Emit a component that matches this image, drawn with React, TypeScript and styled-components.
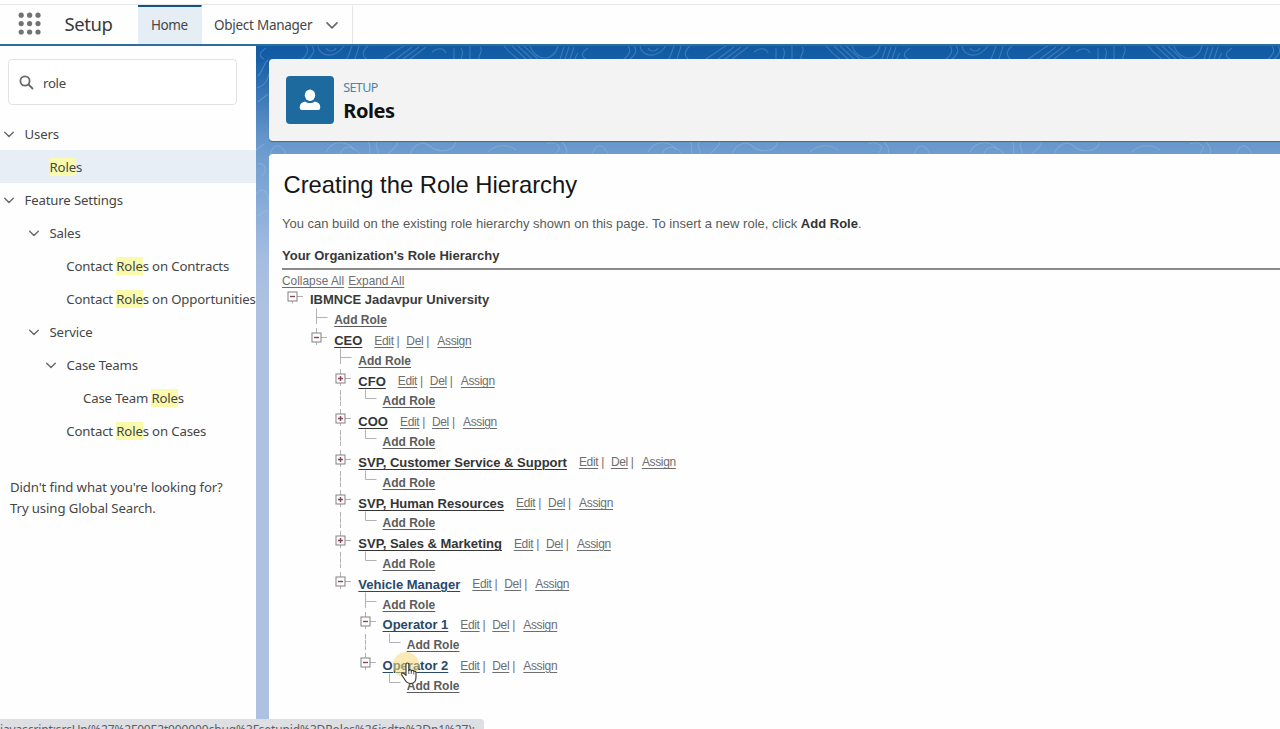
import React from "react";
import styled, { createGlobalStyle } from "styled-components";

const ui = '"Noto Sans", "Open Sans", sans-serif';
const arial = '"Liberation Sans", Arial, sans-serif';

const Global = createGlobalStyle`
  * { box-sizing: border-box; }
  body { margin: 0; background: #fff; overflow: hidden; }
  h1, h2, h3, p { margin: 0; }
`;

const Page = styled.div`
  width: 1280px;
  height: 729px;
  display: flex;
  flex-direction: column;
  overflow: hidden;
  position: relative;
  background: #fefefe;
  font-family: ${ui};
  color: #464646;
`;

const TopBar = styled.header`
  height: 46px;
  flex: none;
  margin-top: 0;
  display: flex;
  align-items: stretch;
  border-bottom: 2px solid #2c6f9f;
  background: linear-gradient(#fff 4px, #e6e6e6 4px, #e6e6e6 5px, #fefefe 5px);
  padding-top: 5px;
`;

const Launcher = styled.div`
  width: 64.5px;
  padding: 7px 0 0 18px;
`;

const AppName = styled.div`
  width: 73.5px;
  font-size: 18.5px;
  line-height: 38px;
  white-space: nowrap;
  letter-spacing: -0.4px;
  color: #3a3a3a;
`;

const Tab = styled.div<{ $active?: boolean; $w: number }>`
  width: ${(p) => p.$w}px;
  padding: 0 0 2px ${(p) => (p.$active ? 13 : 12.5)}px;
  display: flex;
  align-items: center;
  gap: 13px;
  font-size: 13.5px;
  white-space: nowrap;
  letter-spacing: ${(p) => (p.$active ? "-0.4px" : "-0.27px")};
  background: ${(p) => (p.$active ? "#e6eef5" : "transparent")};
  border-top: 2px solid ${(p) => (p.$active ? "#14538a" : "transparent")};
  border-right: 1px solid ${(p) => (p.$active ? "transparent" : "#e4e4e4")};
`;

const Body = styled.div`
  flex: 1;
  display: flex;
  min-height: 0;
`;

const Sidebar = styled.nav`
  width: 256px;
  flex: none;
  background: #fefefe;
  padding-top: 12.5px;
`;

const SearchBox = styled.div`
  width: 229px;
  height: 46px;
  margin: 0 0 12.5px 8px;
  border: 1px solid #e2e2e2;
  border-radius: 4px;
  background: #fff;
  display: flex;
  align-items: center;
  gap: 9px;
  padding: 2px 0 0 10px;
  font-size: 13.2px;
  letter-spacing: -0.3px;
`;

const NavItem = styled.div<{ $indent: number; $selected?: boolean }>`
  height: 33.05px;
  display: flex;
  align-items: center;
  gap: 9.5px;
  padding-left: ${(p) => p.$indent}px;
  font-size: 13.2px;
  letter-spacing: -0.15px;
  white-space: nowrap;
  background: ${(p) => (p.$selected ? "#e8eef5" : "transparent")};
`;

const Mark = styled.span`
  background: #fafaad;
`;

const Help = styled.p`
  padding: 29.5px 0 0 10px;
  font-size: 13.2px;
  line-height: 21px;
  letter-spacing: -0.11px;
`;

const Canvas = styled.main`
  flex: 1;
  min-width: 0;
  position: relative;
  display: flex;
  flex-direction: column;
  gap: 13px;
  padding: 13px 0 0 13px;
  background: linear-gradient(#105aa3 0, #165fa8 14px, #6394c9 90px, #729fd0 115px, #a4bce0 210px, #adc2e2 260px);
`;

const Contours = styled.svg`
  position: absolute;
  left: 0;
  top: 0;
`;

const HeaderCard = styled.section`
  position: relative;
  height: 82px;
  flex: none;
  background: #f3f3f3;
  border-radius: 4px 0 0 4px;
  box-shadow: 0 1px 1px rgba(40, 60, 90, 0.5);
  display: flex;
  padding: 17px 0 0 17.4px;
  gap: 8.8px;
`;

const IconTile = styled.div`
  width: 48px;
  height: 48px;
  border-radius: 4px;
  background: #1d6a9f;
  display: flex;
  align-items: center;
  justify-content: center;
`;

const Eyebrow = styled.div`
  font-size: 12.5px;
  line-height: 18px;
  padding-top: 3px;
  letter-spacing: -0.6px;
  color: #4585b0;
`;

const PageName = styled.h1`
  font-size: 20px;
  line-height: 27px;
  letter-spacing: -0.4px;
  color: #111;
`;

const Content = styled.section`
  position: relative;
  flex: 1;
  background: #fefefe;
  border-radius: 4px 0 0 0;
  font-family: ${arial};
  padding: 17px 0 0 13px;
`;

const Title = styled.h2`
  font-size: 23.8px;
  font-weight: 400;
  line-height: 28px;
  padding-left: 1.5px;
  color: #161616;
`;

const Intro = styled.p`
  margin-top: 16px;
  font-size: 13px;
  line-height: 18px;
  color: #5a5a5a;
  b { color: #333; }
`;

const SectionTitle = styled.h3`
  margin-top: 14px;
  padding-bottom: 3px;
  font-size: 13px;
  line-height: 18px;
  color: #383838;
  border-bottom: 2px solid #8a8a8a;
`;

const Toggles = styled.div`
  display: flex;
  gap: 4px;
  height: 19.3px;
  align-items: center;
  font-size: 11.9px;
  padding-top: 3px;
`;

const Link = styled.span`
  text-decoration: underline;
  text-underline-offset: 2px;
  text-decoration-thickness: 1px;
  color: #6e6e6e;
  white-space: nowrap;
`;

const Row = styled.div`
  height: 20.32px;
  display: flex;
  align-items: center;
  margin-left: -2px;
`;

const Guide = styled.svg`
  width: 24.2px;
  height: 20.32px;
  flex: none;
  overflow: visible;
`;

const NodeName = styled.span<{ $tone: "root" | "role" | "visited" | "add" }>`
  margin-left: 5.8px;
  padding-top: ${(p) => (p.$tone === "root" ? 0 : 0.9)}px;
  font-size: ${(p) => (p.$tone === "add" ? 12 : 13)}px;
  font-weight: 700;
  white-space: nowrap;
  text-decoration: ${(p) => (p.$tone === "root" ? "none" : "underline")};
  text-underline-offset: 2px;
  text-decoration-thickness: 1px;
  color: ${(p) => ({ root: "#3a3a3a", role: "#353535", visited: "#28496b", add: "#5c5c5c" })[p.$tone]};
`;

const Actions = styled.span`
  display: flex;
  margin-left: 12px;
  padding-top: 1px;
  font-size: 12px;
  letter-spacing: -0.35px;
  color: #6e6e6e;
  white-space: nowrap;
`;

const Action = styled.span<{ $w: number }>`
  width: ${(p) => p.$w}px;
`;

const Status = styled.div`
  position: absolute;
  left: 0;
  top: 718.5px;
  width: 484px;
  height: 20px;
  overflow: hidden;
  border-radius: 0 4px 0 0;
  background: #dddfe3;
  font-family: ${ui};
  font-size: 12px;
  line-height: 22px;
  letter-spacing: -0.12px;
  color: #5a5d64;
  white-space: nowrap;
`;

const Pointer = styled.svg`
  position: absolute;
  left: 388px;
  top: 647px;
`;

const Chevron = ({ size = 12 }: { size?: number }) => (
  <svg width={size} height={size} viewBox="0 0 12 12" fill="none" stroke="#686868" strokeWidth="1.4" strokeLinecap="round" strokeLinejoin="round">
    <path d="M1.7 4.2 L6 8.5 L10.3 4.2" />
  </svg>
);

type Shape = "plus" | "minus" | "tee" | "ell" | "pipe" | "none";

const Cell = ({ shape, above }: { shape: Shape; above?: boolean }) => (
  <Guide viewBox="0 0 24.2 20.32">
    <g stroke="#b2b2b2" strokeWidth="1" fill="none">
      {shape === "pipe" && <path d="M12.5 -1 V15" strokeDasharray="5 0.8" />}
      {shape === "tee" && <path d="M12.5 -1.5 V14 M12.5 7.5 H23.5" />}
      {shape === "ell" && <path d="M12.5 -1.5 V7.5 H23.5" />}
      {(shape === "plus" || shape === "minus") && (
        <>
          <path d={above ? "M12.5 -2 V3 M17 7.5 H23 M12.5 12 V15" : "M17 7.5 H23 M12.5 12 V14.5"} />
          <rect x="8" y="3" width="9" height="9" stroke="#808080" fill="#fff" />
          <path d={shape === "plus" ? "M10 7.5 H15 M12.5 5 V10" : "M10 7.5 H15"} stroke="#8c4356" strokeWidth="1.4" />
        </>
      )}
    </g>
  </Guide>
);

type Entry = { cells: Shape[]; label: string; tone: "root" | "role" | "visited" | "add" };

const tree: Entry[] = [
  { cells: ["minus"], label: "IBMNCE Jadavpur University", tone: "root" },
  { cells: ["none", "tee"], label: "Add Role", tone: "add" },
  { cells: ["none", "minus"], label: "CEO", tone: "role" },
  { cells: ["none", "none", "tee"], label: "Add Role", tone: "add" },
  { cells: ["none", "none", "plus"], label: "CFO", tone: "role" },
  { cells: ["none", "none", "pipe", "ell"], label: "Add Role", tone: "add" },
  { cells: ["none", "none", "plus"], label: "COO", tone: "role" },
  { cells: ["none", "none", "pipe", "ell"], label: "Add Role", tone: "add" },
  { cells: ["none", "none", "plus"], label: "SVP, Customer Service & Support", tone: "role" },
  { cells: ["none", "none", "pipe", "ell"], label: "Add Role", tone: "add" },
  { cells: ["none", "none", "plus"], label: "SVP, Human Resources", tone: "role" },
  { cells: ["none", "none", "pipe", "ell"], label: "Add Role", tone: "add" },
  { cells: ["none", "none", "plus"], label: "SVP, Sales & Marketing", tone: "role" },
  { cells: ["none", "none", "pipe", "ell"], label: "Add Role", tone: "add" },
  { cells: ["none", "none", "minus"], label: "Vehicle Manager", tone: "visited" },
  { cells: ["none", "none", "none", "tee"], label: "Add Role", tone: "add" },
  { cells: ["none", "none", "none", "minus"], label: "Operator 1", tone: "visited" },
  { cells: ["none", "none", "none", "pipe", "ell"], label: "Add Role", tone: "add" },
  { cells: ["none", "none", "none", "minus"], label: "Operator 2", tone: "visited" },
  { cells: ["none", "none", "none", "none", "ell"], label: "Add Role", tone: "add" },
];

const TreeRow = ({ entry }: { entry: Entry }) => (
  <Row>
    {entry.cells.map((shape, i) => (
      <Cell key={i} shape={shape} above={entry.cells.length > 1} />
    ))}
    <NodeName $tone={entry.tone}>{entry.label}</NodeName>
    {(entry.tone === "role" || entry.tone === "visited") && (
      <Actions>
        <Action $w={32}><Link>Edit</Link> |</Action>
        <Action $w={31}><Link>Del</Link> |</Action>
        <Link>Assign</Link>
      </Actions>
    )}
  </Row>
);

const topStrip = [
  "M10 2 C4 6 2 10 8 13", "M50 0 C54 5 50 10 46 13", "M56 0 C60 5 56 10 52 13", "M62 0 C63 10 78 14 88 0", "M70 2 C72 6 78 6 80 2",
  "M96 0 C94 5 93 9 91 13", "M103 0 C102 5 100 9 99 13", "M112 0 C106 5 106 9 110 13",
  "M148 0 C142 3 136 8 128 13", "M156 1 L140 13", "M163 1 L147 13", "M170 1 L154 13", "M176 6 C182 1 188 2 190 7",
  "M198 2 V13", "M205 2 C208 6 206 10 205 13", "M214 0 V13", "M224 1 C228 5 222 8 223 13",
  "M248 0 C252 5 256 9 262 13", "M256 0 L270 13", "M262 0 L276 13", "M268 0 L282 13", "M274 0 C280 16 298 16 302 0",
  "M308 1 L304 13", "M313 1 L309 13", "M318 1 L314 13", "M329 2 C323 5 320 8 319 13",
];

const lowStrip = [
  "M14 108 C18 98 24 96 30 108", "M70 106 C76 94 92 94 98 104", "M84 108 C88 98 98 100 104 108", "M112 96 C116 100 112 104 114 108",
  "M121 96 C118 102 124 104 122 108", "M142 96 C140 102 136 104 132 108", "M154 108 C158 98 168 94 174 100 C180 106 196 108 200 96",
  "M232 106 C240 98 252 98 260 104", "M290 98 C300 94 308 102 300 107", "M306 96 C310 100 312 104 310 108",
];

const Pattern = () => (
  <Contours width="1024" height="300" fill="none" stroke="#a9c9ea" strokeOpacity="0.3" strokeWidth="1.1">
    <defs>
      <pattern id="contours" width="322" height="160" patternUnits="userSpaceOnUse">
        {topStrip.map((d) => <path key={d} d={d} strokeOpacity="0.26" />)}
        {lowStrip.map((d) => <path key={d} d={d} />)}
      </pattern>
    </defs>
    <rect width="1024" height="120" fill="url(#contours)" stroke="none" />
    <path d="M2 30 C8 24 8 16 12 14 M1 42 C8 40 12 34 13 28 M2 56 L12 48 M0 104 L8 98 M2 118 C8 116 12 124 6 130 M0 148 C6 140 12 146 12 154 M1 170 L12 164" />
  </Contours>
);

const dots = [3.2, 11.6, 20];

export default function App() {
  return (
    <Page>
      <Global />
      <TopBar>
        <Launcher>
          <svg width="24" height="24" fill="#727272">
            {dots.map((y) => dots.map((x) => <circle key={`${x}-${y}`} cx={x} cy={y} r="2.6" />))}
          </svg>
        </Launcher>
        <AppName>Setup</AppName>
        <Tab $active $w={63.5}>Home</Tab>
        <Tab $w={151.5}>Object Manager <Chevron size={14} /></Tab>
      </TopBar>
      <Body>
        <Sidebar>
          <SearchBox>
            <svg width="15" height="15" viewBox="0 0 15 15" fill="none" stroke="#686868" strokeWidth="1.8" strokeLinecap="round">
              <circle cx="6" cy="6" r="4.6" />
              <path d="M9.5 9.5 L13.5 13.5" />
            </svg>
            role
          </SearchBox>
          <NavItem $indent={3}><Chevron />Users</NavItem>
          <NavItem $indent={49.5} $selected><span><Mark>Role</Mark>s</span></NavItem>
          <NavItem $indent={3}><Chevron />Feature Settings</NavItem>
          <NavItem $indent={28}><Chevron />Sales</NavItem>
          <NavItem $indent={66.3}><span>Contact <Mark>Role</Mark>s on Contracts</span></NavItem>
          <NavItem $indent={66.3}><span>Contact <Mark>Role</Mark>s on Opportunities</span></NavItem>
          <NavItem $indent={28}><Chevron />Service</NavItem>
          <NavItem $indent={45}><Chevron />Case Teams</NavItem>
          <NavItem $indent={83}><span>Case Team <Mark>Role</Mark>s</span></NavItem>
          <NavItem $indent={66.3}><span>Contact <Mark>Role</Mark>s on Cases</span></NavItem>
          <Help>Didn't find what you're looking for?<br />Try using Global Search.</Help>
        </Sidebar>
        <Canvas>
          <Pattern />
          <HeaderCard>
            <IconTile>
              <svg width="22" height="22" viewBox="0 0 22 22" fill="#fff">
                <ellipse cx="11" cy="6.2" rx="5.2" ry="5.7" />
                <path d="M6.2 12.6 C8.8 14.6 13.2 14.6 15.8 12.6 C19 13.4 21.2 15 21.2 17.6 V19 Q21.2 21 19.2 21 H2.8 Q0.8 21 0.8 19 V17.6 C0.8 15 3 13.4 6.2 12.6 Z" />
              </svg>
            </IconTile>
            <div>
              <Eyebrow>SETUP</Eyebrow>
              <PageName>Roles</PageName>
            </div>
          </HeaderCard>
          <Content>
            <Title>Creating the Role Hierarchy</Title>
            <Intro>You can build on the existing role hierarchy shown on this page. To insert a new role, click <b>Add Role</b>.</Intro>
            <SectionTitle>Your Organization's Role Hierarchy</SectionTitle>
            <Toggles><Link>Collapse All</Link><Link>Expand All</Link></Toggles>
            {tree.map((entry, i) => <TreeRow key={i} entry={entry} />)}
          </Content>
        </Canvas>
      </Body>
      <Status>javascript:srcUp(%27%2F00E2t000000cbug%3Fsetupid%3DRoles%26isdtp%3Dp1%27);</Status>
      <Pointer width="40" height="42" viewBox="0 0 40 42">
        <circle cx="18" cy="18" r="13" fill="#f6d878" fillOpacity="0.55" />
        <path d="M18 17.5 c0-2 2.8-2 2.8 0 v6 c.4-1.3 2.4-1 2.5.4 c.6-1 2.3-.7 2.5.6 c.7-.7 2.2-.2 2.2 1.2 v4.3 c0 4-2 6.5-5 6.5 c-3 0-4.5-1-6-3.5 l-3.2-5 c-.9-1.7 1-2.7 2.2-1.5 l2 1.9 z" fill="#fff" stroke="#333" strokeWidth="1.1" strokeLinejoin="round" />
        <path d="M20.8 23 v4 M23.3 24 v3 M25.8 25 v2.5" stroke="#333" strokeWidth="0.8" />
      </Pointer>
    </Page>
  );
}
